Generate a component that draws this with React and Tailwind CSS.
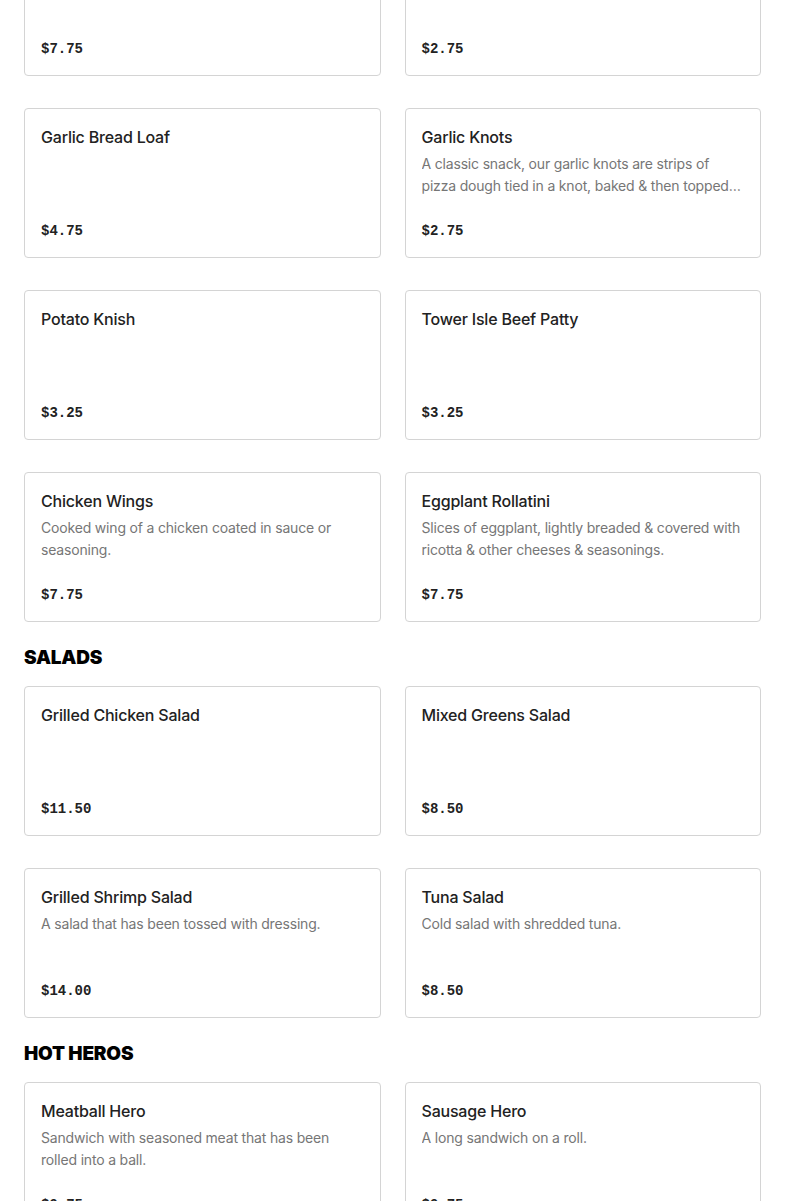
import React from 'react';

const sections = [
  {
    title: null,
    items: [
      { name: 'Mozzarella Sticks', desc: '', price: '$7.75' },
      { name: 'Garlic Bread', desc: '', price: '$2.75' },
      { name: 'Garlic Bread Loaf', desc: '', price: '$4.75' },
      {
        name: 'Garlic Knots',
        desc: 'A classic snack, our garlic knots are strips of pizza dough tied in a knot, baked & then topped with garlic & herbs.',
        price: '$2.75',
      },
      { name: 'Potato Knish', desc: '', price: '$3.25' },
      { name: 'Tower Isle Beef Patty', desc: '', price: '$3.25' },
      {
        name: 'Chicken Wings',
        desc: 'Cooked wing of a chicken coated in sauce or seasoning.',
        price: '$7.75',
      },
      {
        name: 'Eggplant Rollatini',
        desc: 'Slices of eggplant, lightly breaded & covered with ricotta & other cheeses & seasonings.',
        price: '$7.75',
      },
    ],
  },
  {
    title: 'SALADS',
    items: [
      { name: 'Grilled Chicken Salad', desc: '', price: '$11.50' },
      { name: 'Mixed Greens Salad', desc: '', price: '$8.50' },
      { name: 'Grilled Shrimp Salad', desc: 'A salad that has been tossed with dressing.', price: '$14.00' },
      { name: 'Tuna Salad', desc: 'Cold salad with shredded tuna.', price: '$8.50' },
    ],
  },
  {
    title: 'HOT HEROS',
    items: [
      {
        name: 'Meatball Hero',
        desc: 'Sandwich with seasoned meat that has been rolled into a ball.',
        price: '$9.75',
      },
      { name: 'Sausage Hero', desc: 'A long sandwich on a roll.', price: '$9.75' },
    ],
  },
];

const MenuCard = ({ item }) => (
  <div className="h-[150px] flex flex-col border border-[#d4d4d4] rounded-[4px] bg-white px-4 pt-4 pb-4">
    <h3 className="text-[16px] leading-6 font-medium tracking-[-0.2px] text-[#222]">{item.name}</h3>
    {item.desc && (
      <p className="mt-1 text-[14px] leading-[22px] tracking-[-0.18px] text-[#767676] line-clamp-2">
        {item.desc}
      </p>
    )}
    <div className="mt-auto text-[14px] leading-5 font-bold text-[#222] font-['Liberation_Mono',monospace]">
      {item.price}
    </div>
  </div>
);

const App = () => {
  return (
    <div className="bg-white min-h-screen font-['Inter',sans-serif]">
      <div className="px-6 -mt-[74px]">
        {sections.map((section, i) => (
          <div key={i}>
            {section.title && (
              <h2 className="mt-[22px] mb-[14px] text-[19px] leading-7 font-black text-black tracking-[-0.2px]">
                {section.title}
              </h2>
            )}
            <div className="grid grid-cols-2 gap-x-6 gap-y-8">
              {section.items.map((item) => (
                <MenuCard key={item.name} item={item} />
              ))}
            </div>
          </div>
        ))}
      </div>
    </div>
  );
};

export default App;
